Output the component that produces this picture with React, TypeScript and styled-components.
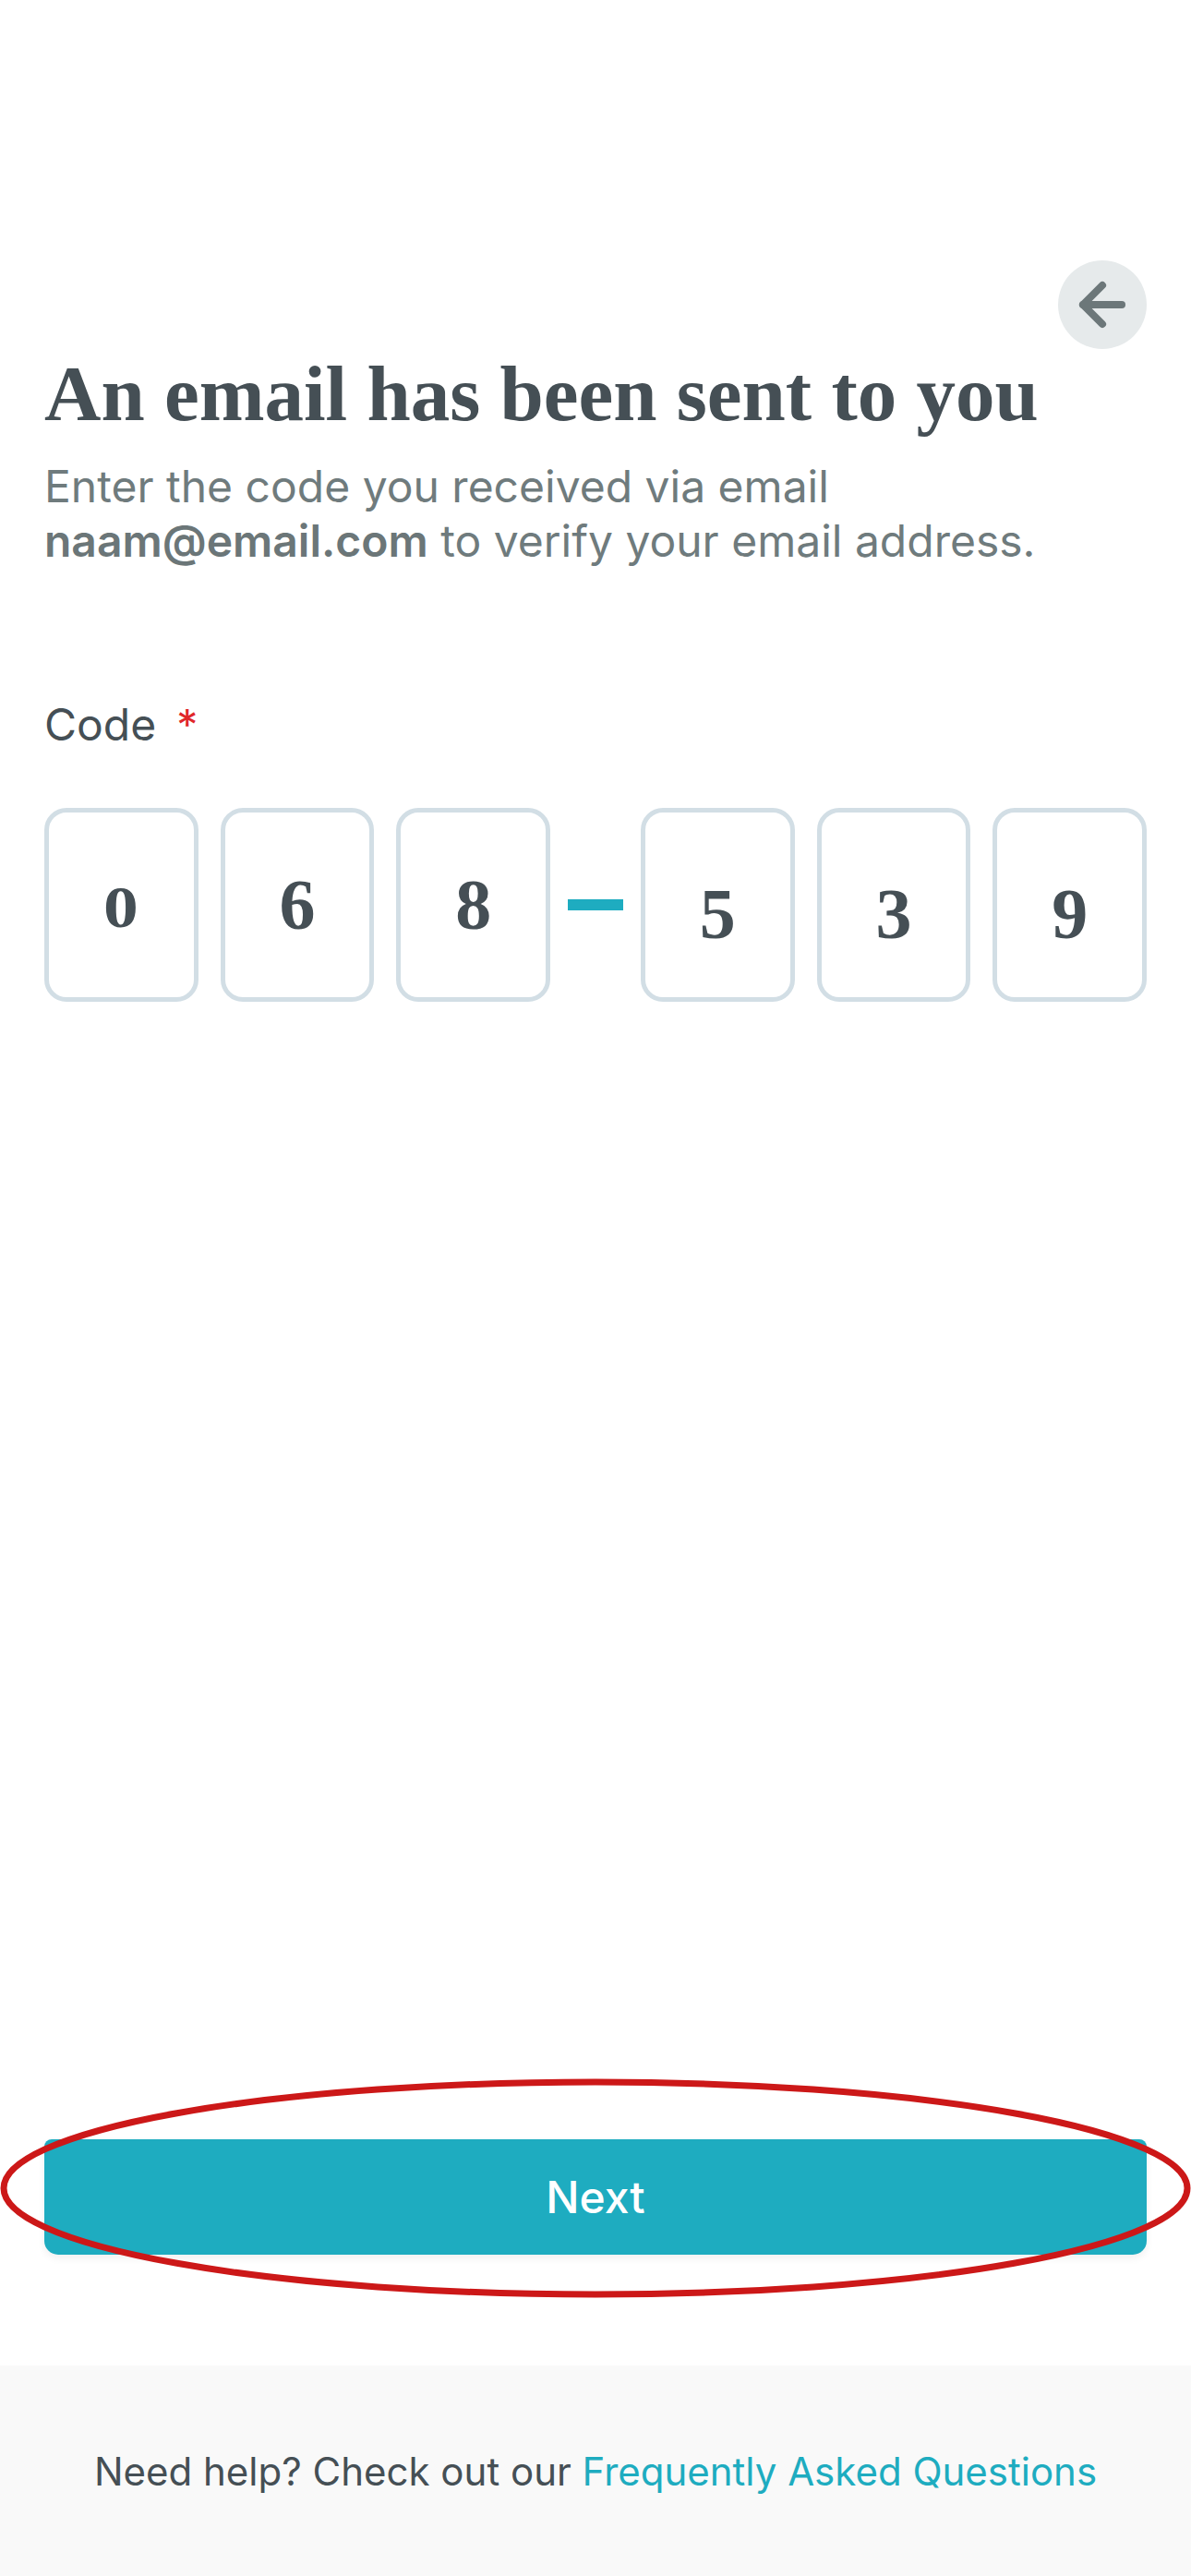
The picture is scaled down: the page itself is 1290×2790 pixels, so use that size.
import React from "react";
import styled, { createGlobalStyle } from "styled-components";

const GlobalStyle = createGlobalStyle`
  html, body {
    margin: 0;
    padding: 0;
    background: #ffffff;
  }
  body {
    font-family: Inter, "Noto Sans", "Liberation Sans", sans-serif;
    -webkit-font-smoothing: antialiased;
  }
  * { box-sizing: border-box; }
`;

const Page = styled.div`
  min-height: 100vh;
  display: flex;
  flex-direction: column;
  background: #ffffff;
`;

const Main = styled.main`
  flex: 1;
  display: flex;
  flex-direction: column;
  padding: 282px 48px 0;
`;

const TopBar = styled.div`
  display: flex;
  justify-content: flex-end;
`;

const BackButton = styled.button`
  width: 96px;
  height: 96px;
  border-radius: 50%;
  border: none;
  padding: 0;
  background: #e6eaeb;
  color: #6c7779;
  display: flex;
  align-items: center;
  justify-content: center;
  cursor: pointer;
`;

const Title = styled.h1`
  margin: 0;
  font-family: "Liberation Serif", "DejaVu Serif", serif;
  font-weight: 700;
  font-size: 85px;
  line-height: 1.14;
  color: #454f55;
  letter-spacing: 0;
`;

const Lead = styled.p`
  margin: 22px 0 0;
  font-size: 48px;
  line-height: 59px;
  color: #6f7b7d;
  font-weight: 400;
`;

const Email = styled.strong`
  font-weight: 600;
  color: #6b7678;
`;

const Label = styled.label`
  margin-top: 141px;
  display: flex;
  align-items: baseline;
  gap: 22px;
  font-size: 48px;
  line-height: 1.2;
  color: #454f55;
`;

const Required = styled.span`
  color: #e0262a;
  font-size: 46px;
`;

const CodeRow = styled.div`
  margin-top: 62px;
  display: flex;
  align-items: center;
`;

const Group = styled.div`
  flex: 1;
  display: flex;
  gap: 24px;
`;

const Dash = styled.span`
  width: 60px;
  height: 12px;
  margin: 0 19px;
  background: #1eacc0;
  flex: none;
`;

const Cell = styled.div`
  flex: 1;
  height: 210px;
  border: 5px solid #d2dee5;
  border-radius: 24px;
  background: #ffffff;
  display: flex;
  align-items: center;
  justify-content: center;
`;

type Form = "x" | "asc" | "desc";

const Digit = styled.span<{ $form: Form }>`
  display: inline-block;
  font-family: "Liberation Serif", "DejaVu Serif", serif;
  font-weight: 700;
  color: #454f55;
  line-height: 1;
  font-size: ${(p) => (p.$form === "x" ? "64px" : "78px")};
  transform: ${(p) =>
    p.$form === "x"
      ? "translateY(3px) scaleX(1.18)"
      : p.$form === "desc"
      ? "translateY(10px)"
      : "none"};
`;

const Spacer = styled.div`
  flex: 1;
`;

const ButtonArea = styled.div`
  position: relative;
  margin-bottom: 120px;
`;

const NextButton = styled.button`
  width: 100%;
  height: 125px;
  border: none;
  border-radius: 8px 8px 15px 15px;
  background: #1eacc0;
  color: #ffffff;
  font-family: Inter, "Noto Sans", sans-serif;
  font-size: 48px;
  font-weight: 500;
  box-shadow: 0 4px 8px rgba(0, 0, 0, 0.06);
  cursor: pointer;
`;

const Annotation = styled.svg`
  position: absolute;
  left: -48px;
  top: -66px;
  width: 1290px;
  height: 238px;
  pointer-events: none;
  overflow: visible;
`;

const Footer = styled.footer`
  height: 228px;
  background: #f9f9f9;
  display: flex;
  align-items: center;
  justify-content: center;
  font-size: 42px;
  color: #454f55;
`;

const Link = styled.a`
  color: #1eacc0;
  text-decoration: none;
`;

const oldStyleForm = (d: string): Form => {
  if (d === "6" || d === "8") return "asc";
  if ("34579".includes(d)) return "desc";
  return "x";
};

const ArrowLeftIcon = () => (
  <svg width="72" height="72" viewBox="0 0 24 24" fill="none" stroke="currentColor"
    strokeWidth="2.7" strokeLinecap="round" strokeLinejoin="round">
    <path d="M12 19l-7-7 7-7" />
    <path d="M19 12H5" />
  </svg>
);

export default function App() {
  const first = ["0", "6", "8"];
  const second = ["5", "3", "9"];
  return (
    <Page>
      <GlobalStyle />
      <Main>
        <TopBar>
          <BackButton aria-label="Back">
            <ArrowLeftIcon />
          </BackButton>
        </TopBar>
        <Title>An email has been sent to you</Title>
        <Lead>
          Enter the code you received via email
          <br />
          <Email>naam@email.com</Email> to verify your email address.
        </Lead>
        <Label>
          Code <Required>*</Required>
        </Label>
        <CodeRow>
          <Group>
            {first.map((d, i) => (
              <Cell key={i}>
                <Digit $form={oldStyleForm(d)}>{d}</Digit>
              </Cell>
            ))}
          </Group>
          <Dash />
          <Group>
            {second.map((d, i) => (
              <Cell key={i}>
                <Digit $form={oldStyleForm(d)}>{d}</Digit>
              </Cell>
            ))}
          </Group>
        </CodeRow>
        <Spacer />
        <ButtonArea>
          <NextButton>Next</NextButton>
          <Annotation viewBox="0 0 1290 238">
            <ellipse cx="645" cy="119" rx="641" ry="115" fill="none" stroke="#cc1818" strokeWidth="7" />
          </Annotation>
        </ButtonArea>
      </Main>
      <Footer>
        <span>
          Need help? Check out our <Link href="#">Frequently Asked Questions</Link>
        </span>
      </Footer>
    </Page>
  );
}
